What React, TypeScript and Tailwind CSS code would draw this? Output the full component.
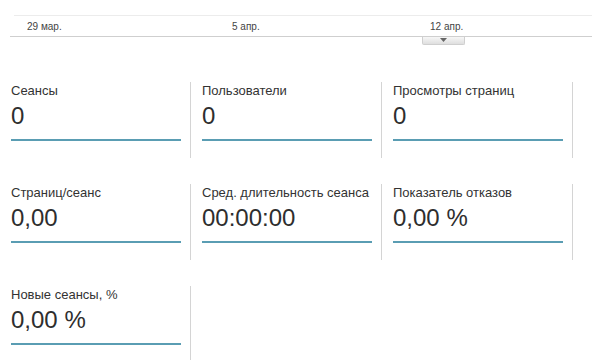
const metrics = [
  { label: "Сеансы", value: "0" },
  { label: "Пользователи", value: "0" },
  { label: "Просмотры страниц", value: "0" },
  { label: "Страниц/сеанс", value: "0,00" },
  { label: "Сред. длительность сеанса", value: "00:00:00" },
  { label: "Показатель отказов", value: "0,00 %" },
  { label: "Новые сеансы, %", value: "0,00 %" },
];

function MetricCard({ label, value }: { label: string; value: string }) {
  return (
    <div className="h-[76px] w-[191px] border-r border-[#d4d4d4] pl-[11px] pr-[9px] pt-[1px]">
      <div className="text-[13px] leading-[16px] text-[#333]">{label}</div>
      <div className="mt-[3px] text-[24px] leading-[28px] text-[#2e2e2e]">{value}</div>
      <div className="mt-[9px] h-[2px] w-[170px] bg-[#5a9db3]" />
    </div>
  );
}

export default function App() {
  return (
    <div className="h-[360px] w-[592px] overflow-hidden bg-white font-['Liberation_Sans',Arial,sans-serif]">
      {/* chart axis */}
      <div className="pt-[15px]">
        <div className="ml-[14px] border-t border-[#ececec]" />
        <div className="flex h-[20px] items-center pl-[27px] text-[10px] text-[#444]">
          <span className="w-[205px]">29 мар.</span>
          <span className="w-[198px]">5 апр.</span>
          <span>12 апр.</span>
        </div>
        <div className="ml-[10px] border-t border-[#cfcfcf]" />
        <div className="ml-[422px] flex h-[8px] w-[43px] items-start justify-center rounded-b-[2px] border border-t-0 border-[#cfcfcf] bg-gradient-to-b from-[#f7f7f7] to-[#dedede]">
          <svg width="7" height="4" viewBox="0 0 7 4" className="mt-[1px]">
            <path d="M0 0 L7 0 L3.5 4 Z" fill="#666" />
          </svg>
        </div>
      </div>

      <div className="mt-[37px] grid grid-cols-[191px_191px_191px] gap-y-[26px]">
        {metrics.map((m) => (
          <MetricCard key={m.label} label={m.label} value={m.value} />
        ))}
      </div>
    </div>
  );
}
